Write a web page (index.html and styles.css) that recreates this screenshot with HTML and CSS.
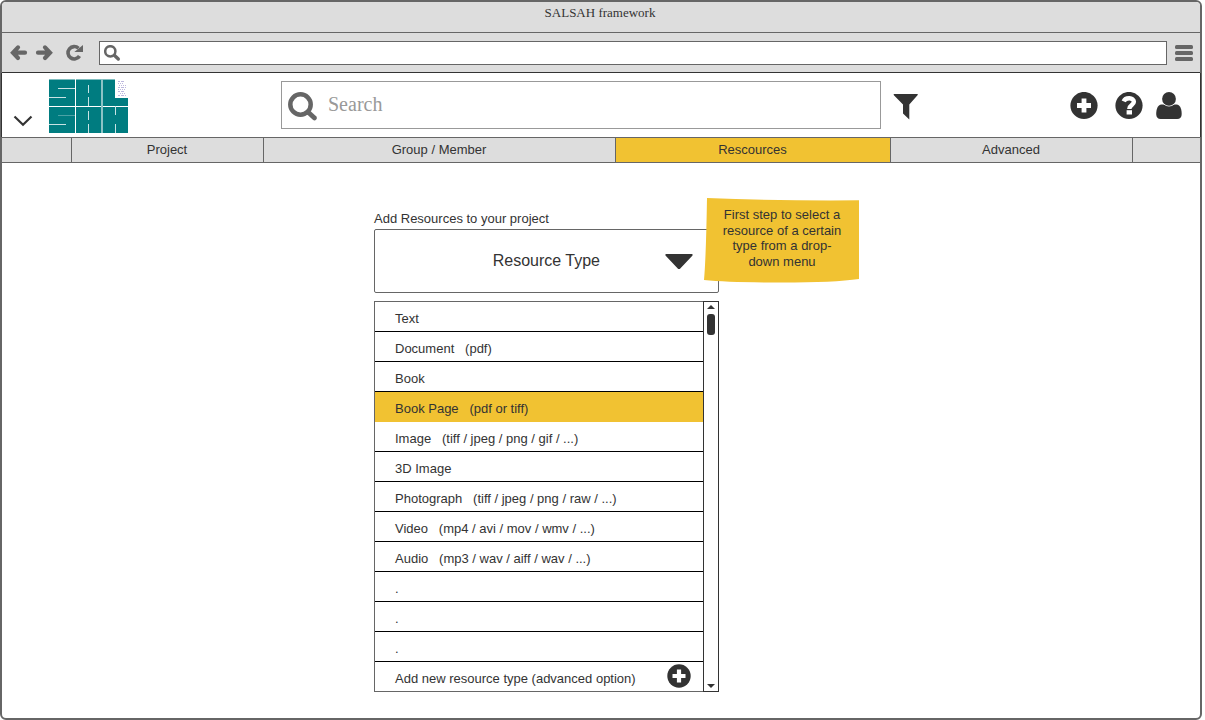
FILE: index.html
```html
<!DOCTYPE html>
<html lang="en">
<head>
<meta charset="utf-8">
<title>SALSAH framework</title>
<link rel="stylesheet" href="styles.css">
</head>
<body>
<div class="window">
  <div class="titlebar">SALSAH framework</div>
  <div class="toolbar">
    <svg class="nav-icons" width="76" height="20" viewBox="0 0 76 20">
      <g fill="none" stroke="#666" stroke-width="4.200" stroke-linecap="round" stroke-linejoin="miter">
        <path d="M9 4.400L4 9.700L9 15M5 9.700H16"/>
        <path d="M36 4.400L41 9.700L36 15M40 9.700H29"/>
        <path stroke-linecap="butt" stroke-width="3.600" d="M70.500 13A6.200 6.200 0 1 1 69.500 5.300"/>
      </g>
      <path d="M74 2V9H65.300Z" fill="#666"/>
    </svg>
    <div class="address">
      <svg width="18" height="18" viewBox="0 0 18 18" fill="none" stroke="#666">
        <circle cx="6.300" cy="6.300" r="5.100" stroke-width="2.500"/>
        <path d="M10.300 10.300L14.300 14" stroke-width="3.400" stroke-linecap="round"/>
      </svg>
    </div>
    <svg class="menu" width="18" height="18" viewBox="0 0 18 18" fill="#666">
      <rect y="1" width="18" height="4" rx="1.500"/><rect y="7" width="18" height="4" rx="1.500"/><rect y="13" width="18" height="4" rx="1.500"/>
    </svg>
  </div>
  <div class="header">
    <svg class="chevron" width="20" height="12" viewBox="0 0 20 12" fill="none" stroke="#333" stroke-width="2.200"><path d="M1.500 1.500L10 9.700L18.500 1.500"/></svg>
    <svg class="logo" width="79" height="54" viewBox="0 0 79 54">
      <path fill="#007c80" d="M0 .5H66V19H79V54H0Z"/>
      <path stroke="#fff" d="M0 27.500H79M26.500 0V54"/>
      <path stroke="#8cc3c5" stroke-width="2" d="M53 0V54"/>
      <path stroke="#c9e3e4" d="M9 9.500H26M0 18.500H17M0 45.500H17M39.500 6V14M39.500 18V27M39.500 32V41M39.500 45V54M66.500 27V36M66.500 45V54"/>
      <path stroke="#4ba2a5" d="M9 36.500H26"/>
      <g stroke="#bdb8de" fill="none" stroke-width="1"><path stroke-dasharray="2 1 3 1" d="M69 2.500H76M69 8.500H77M69 12.500H76M69 16.500H77"/><path stroke-dasharray="1 1" d="M69 4.500H75M70 6.500H78M69 10.500H76M71 14.500H77"/></g>
    </svg>
    <div class="search">
      <svg width="34" height="34" viewBox="0 0 34 34" fill="none" stroke="#666">
        <circle cx="13.500" cy="13.500" r="10.200" stroke-width="4.500"/><path d="M21.500 21.500L27.500 27" stroke-width="4.800" stroke-linecap="round"/>
      </svg>
      <span>Search</span>
    </div>
    <svg class="filter" width="26" height="26" viewBox="0 0 26 26"><path fill="#333" d="M1.300 0H24.200Q25.500 0 24.500 1.300L16.300 10.500V25.500L10 19.500V10.500L.9 1.300Q0 0 1.300 0Z"/></svg>
    <svg class="plus" width="28" height="28" viewBox="0 0 28 28"><circle cx="14" cy="13.500" r="13.600" fill="#333"/><path d="M14 6.500V20.500M7 13.500H21" stroke="#fff" stroke-width="4.800"/></svg>
    <svg class="help" width="28" height="28" viewBox="0 0 28 28"><circle cx="14" cy="13.500" r="13.600" fill="#333"/><path d="M8.700 9.300C10.500 5 18.900 5.200 18.900 9.800C18.900 13.200 14.300 12.900 14.300 17" fill="none" stroke="#fff" stroke-width="4.400"/><rect x="11.600" y="18.200" width="5.400" height="4.300" fill="#fff"/></svg>
    <svg class="user" width="26" height="28" viewBox="0 0 26 28" fill="#333"><path d="M5.500 12.500C1.500 12.500 .2 18 .2 22C.2 25.500 2 27 4.500 27H21.200C24 27 25.700 25.500 25.700 22C25.700 18 24.500 12.500 20.500 12.500Z"/><circle cx="13" cy="7" r="7.500" fill="#fff"/><circle cx="13" cy="6.900" r="6.900"/></svg>
  </div>
  <div class="tabs">
    <div></div><div>Project</div><div>Group / Member</div><div class="active">Rescources</div><div>Advanced</div><div></div>
  </div>
  <div class="content">
    <div class="label">Add Resources to your project</div>
    <div class="select">
      <span>Resource Type</span>
      <svg class="caret" width="28" height="16" viewBox="0 0 28 16"><path fill="#333" d="M1.300 0H26.700Q28.300 0 27.300 1.800L15.500 14.200Q14 16 12.500 14.200L.7 1.800Q-.3 0 1.300 0Z"/></svg>
      <div class="note">
        <svg width="156" height="87" viewBox="0 0 156 87"><path fill="#f1c232" d="M3 0Q80 3 155 2.300L155 81Q130 84.500 78 84.500T0 82Q2 60 3 0Z"/></svg>
        <p>First step to select a<br>resource of a certain<br>type from a drop-<br>down menu</p>
      </div>
    </div>
    <div class="list">
      <div class="rows">
        <div class="row">Text</div>
        <div class="row">Document &nbsp; (pdf)</div>
        <div class="row">Book</div>
        <div class="row selected">Book Page &nbsp; (pdf or tiff)</div>
        <div class="row">Image &nbsp; (tiff / jpeg / png / gif / ...)</div>
        <div class="row">3D Image</div>
        <div class="row">Photograph &nbsp; (tiff / jpeg / png / raw / ...)</div>
        <div class="row">Video &nbsp; (mp4 / avi / mov / wmv / ...)</div>
        <div class="row">Audio &nbsp; (mp3 / wav / aiff / wav / ...)</div>
        <div class="row">.</div>
        <div class="row">.</div>
        <div class="row">.</div>
        <div class="row add">Add new resource type (advanced option)
          <svg width="24" height="24" viewBox="0 0 24 24"><circle cx="12" cy="12" r="11.700" fill="#333"/><path d="M12 5.500V18.500M5.500 12H18.500" stroke="#fff" stroke-width="4.200"/></svg>
        </div>
      </div>
      <div class="scrollbar">
        <svg width="8" height="4" viewBox="0 0 8 4"><path fill="#333" d="M4 0L8 4H0Z"/></svg>
        <div class="thumb"></div>
        <svg class="down" width="8" height="4" viewBox="0 0 8 4"><path fill="#333" d="M0 0H8L4 4Z"/></svg>
      </div>
    </div>
  </div>
</div>
</body>
</html>
```

FILE: styles.css
```css
* { box-sizing: border-box; }
body { margin: 0; background: #fff; color: #333; font: 13px/16px "Liberation Sans", Arial, sans-serif; }
svg { display: block; flex: none; }
.window { width: 1202px; height: 720px; border: 2px solid #666; border-radius: 6px; }
.titlebar { height: 31px; padding: 3px 2px 0 0; background: #ddd; border-bottom: 1px solid #666; border-radius: 4px 4px 0 0; text-align: center; font: 13px/16px "Liberation Serif", "Times New Roman", serif; }
.toolbar { height: 40px; display: flex; align-items: center; background: #ddd; border-bottom: 1px solid #333; padding-left: 7px; }
.nav-icons { margin-right: 14px; }
.address { width: 1068px; height: 24px; border: 1px solid #666; background: #fff; padding: 3px 4px; }
.menu { margin-left: 8px; }
.header { height: 64px; margin: 0 -1px; display: flex; align-items: flex-start; border: solid #333; border-width: 0 1px; padding-left: 11px; }
.chevron { margin-top: 42px; }
.logo { margin: 6px 0 0 16px; }
.search { width: 600px; height: 48px; margin: 8px 0 0 153px; border: 1px solid #999; display: flex; align-items: center; padding-left: 5px; }
.search svg { margin-top: 5px; }
.search span { margin: -2px 0 0 7px; color: #999; font: 20px/24px "Liberation Serif", "Times New Roman", serif; }
.filter { margin: 21px 0 0 12px; }
.plus { margin: 19px 0 0 151px; }
.help { margin: 19px 0 0 17px; }
.user { margin: 19px 0 0 13px; }
.tabs { height: 26px; display: grid; grid-template-columns: 70px 192px 352px 275px 242px 1fr; border: solid #666; border-width: 1px 0; background: #ddd; text-align: center; line-height: 23px; }
.tabs div { border-right: 1px solid #666; padding-right: 1px; }
.tabs div:last-child { border-right: 0; }
.tabs .active { background: #f1c232; }
.content { width: 345px; margin: 48px 0 0 372px; }
.label { height: 18px; line-height: 16px; }
.select { position: relative; height: 64px; border: 1px solid #666; border-radius: 2px; display: flex; align-items: center; justify-content: flex-end; padding-right: 25px; font-size: 16px; }
.select span { margin-right: 65px; }
.caret { margin-top: 2px; }
.note { position: absolute; left: 329px; top: -32px; width: 156px; height: 87px; font-size: 13px; line-height: 15.7px; text-align: center; }
.note p { position: absolute; left: 0; right: 0; top: 9px; margin: 0; }
.list { height: 391px; margin-top: 8px; display: flex; }
.rows { flex: 1; border: 1px solid #666; border-right: 0; }
.row { height: 30px; padding: 9px 0 0 20px; line-height: 16px; border-bottom: 1px solid #000; }
.selected { background: #f1c232; border-bottom-color: #f1c232; }
.add { height: 29px; border-bottom: 0; display: flex; justify-content: space-between; padding-right: 12px; }
.add svg { margin-top: -7px; }
.scrollbar { width: 16px; border: 1px solid #333; display: flex; flex-direction: column; align-items: center; padding: 3px 0; }
.thumb { width: 8px; height: 21px; margin-top: 5px; border-radius: 3px; background: #333; }
.down { margin-top: auto; }
```
